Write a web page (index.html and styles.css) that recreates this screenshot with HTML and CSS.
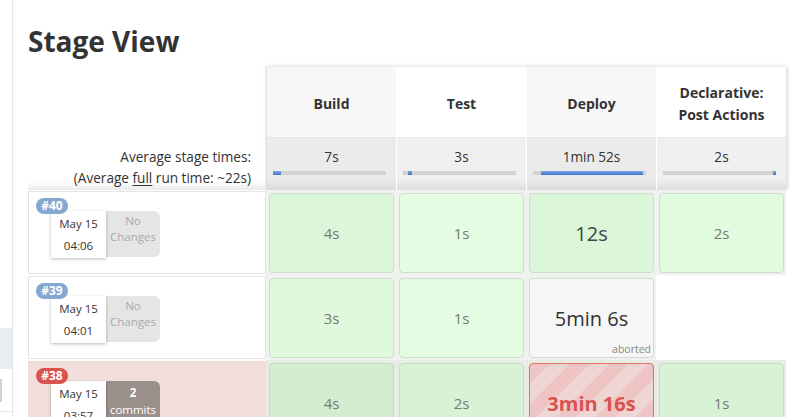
FILE: index.html
```html
<!DOCTYPE html>
<html lang="en">
<head>
<meta charset="utf-8">
<title>Stage View</title>
<link rel="stylesheet" href="styles.css">
</head>
<body>
<div class="page">
  <aside class="side">
    <div class="side-item"></div>
    <div class="side-field"><div class="side-bar"></div></div>
  </aside>
  <main class="main">
    <h2 class="title">Stage View</h2>
    <div class="sv-head">
      <div class="sv-labels">
        <div class="avg-label">Average stage times:<br>(Average <u>full</u> run time: ~22s)</div>
      </div>
      <div class="sv-stages">
        <div class="stage-col odd">
          <div class="stage-name">Build</div>
          <div class="stage-avg">
            <div class="avg-time">7s</div>
            <div class="track"><div class="fill" style="margin-left:0;width:8px"></div></div>
          </div>
        </div>
        <div class="stage-col">
          <div class="stage-name">Test</div>
          <div class="stage-avg">
            <div class="avg-time">3s</div>
            <div class="track"><div class="fill" style="margin-left:5px;width:4px"></div></div>
          </div>
        </div>
        <div class="stage-col odd">
          <div class="stage-name">Deploy</div>
          <div class="stage-avg">
            <div class="avg-time">1min 52s</div>
            <div class="track"><div class="fill" style="margin-left:8px;width:102px"></div></div>
          </div>
        </div>
        <div class="stage-col">
          <div class="stage-name">Declarative:<br>Post Actions</div>
          <div class="stage-avg">
            <div class="avg-time">2s</div>
            <div class="track"><div class="fill" style="margin-left:110px;width:3px"></div></div>
          </div>
        </div>
      </div>
    </div>

    <div class="sv-row">
      <div class="build-cell">
        <span class="badge blue">#40</span>
        <div class="build-info">
          <div class="date-box">May 15<br>04:06</div>
          <div class="changes">No<br>Changes</div>
        </div>
      </div>
      <div class="stage-wrap"><div class="stage ok s1">4s</div></div>
      <div class="stage-wrap"><div class="stage ok s2">1s</div></div>
      <div class="stage-wrap"><div class="stage ok s1 big">12s</div></div>
      <div class="stage-wrap"><div class="stage ok s3">2s</div></div>
    </div>

    <div class="sv-row">
      <div class="build-cell">
        <span class="badge blue">#39</span>
        <div class="build-info">
          <div class="date-box">May 15<br>04:01</div>
          <div class="changes">No<br>Changes</div>
        </div>
      </div>
      <div class="stage-wrap"><div class="stage ok s4">3s</div></div>
      <div class="stage-wrap"><div class="stage ok s2">1s</div></div>
      <div class="stage-wrap"><div class="stage aborted big">5min 6s<span class="note">aborted</span></div></div>
      <div class="stage-wrap empty"></div>
    </div>

    <div class="sv-row failed">
      <div class="build-cell">
        <span class="badge red">#38</span>
        <div class="build-info">
          <div class="date-box">May 15<br>03:57</div>
          <div class="changes commits"><b>2</b><br>commits</div>
        </div>
      </div>
      <div class="stage-wrap"><div class="stage ok f1">4s</div></div>
      <div class="stage-wrap"><div class="stage ok f2">2s</div></div>
      <div class="stage-wrap"><div class="stage fail big">3min 16s</div></div>
      <div class="stage-wrap"><div class="stage ok f2">1s</div></div>
    </div>
  </main>
</div>
</body>
</html>
```
FILE: styles.css
```css
* { box-sizing: border-box; }
body {
  margin: 0;
  font-family: "Open Sans", "Noto Sans", "DejaVu Sans", sans-serif;
  color: #333;
  background: #fff;
}
.page { display: flex; height: 417px; overflow: hidden; }
.side {
  width: 13px;
  flex: none;
  border-right: 1px solid #e4e8ec;
  padding-top: 328px;
}
.side-item { height: 41px; background: #e9edf1; }
.side-field {
  height: 43px;
  padding-top: 10px;
  border-bottom: 1px solid #e4e8ec;
}
.side-bar { width: 2px; height: 23px; background: #d2d2d2; }
.main { padding-left: 15px; flex: 1; }
.title {
  margin: 26px 0 11px;
  font-size: 28px;
  line-height: 30px;
  font-weight: 700;
  color: #333;
}
.sv-head { display: flex; }
.sv-labels {
  width: 238px;
  display: flex;
  flex-direction: column;
  justify-content: flex-end;
}
.avg-label {
  height: 52px;
  padding: 8px 15px 0 0;
  text-align: right;
  font-size: 13.6px;
  line-height: 21px;
  background: linear-gradient(#fff 84%, #eaeaea);
}
.avg-label u { text-underline-offset: 2px; }
.sv-stages {
  display: flex;
  border-left: 1px solid #dedede;
  box-shadow: 0 -1px 4px rgba(0,0,0,0.10), 2px 0 3px rgba(0,0,0,0.06);
}
.stage-col {
  width: 130px;
  display: flex;
  flex-direction: column;
  border-right: 1px solid #fff;
}
.stage-col:last-child { border-right: 1px solid #e4e4e4; }
.stage-name {
  height: 71px;
  padding-top: 4px;
  display: flex;
  align-items: center;
  justify-content: center;
  text-align: center;
  font-size: 14px;
  line-height: 22px;
  font-weight: 700;
  color: #333;
  background: #fff;
  border-bottom: 1px solid #e6e6e6;
}
.stage-col.odd .stage-name { background: #f7f7f7; }
.stage-avg {
  height: 52px;
  padding-top: 8px;
  background: linear-gradient(#f0f0f0 78%, #dedede);
}
.stage-col.odd .stage-avg { background: linear-gradient(#ebebeb 78%, #dadada); }
.avg-time {
  text-align: center;
  font-size: 13.6px;
  line-height: 22px;
}
.track {
  margin: 3px 0 0 6px;
  width: 113px;
  height: 4px;
  background: #d3d3d3;
  display: flex;
}
.fill { height: 4px; background: linear-gradient(#7ea3e3, #3f73cf); }

.sv-row { display: flex; height: 85px; }
.build-cell {
  width: 238px;
  height: 83px;
  margin-top: 1px;
  border: 1px solid #e4e4e4;
  background: #fff;
  position: relative;
  padding: 19px 0 0 22px;
}
.badge {
  position: absolute;
  left: 7px;
  top: 6px;
  z-index: 2;
  width: 32px;
  height: 16px;
  border-radius: 8px;
  color: #fff;
  font-size: 12px;
  font-weight: 700;
  line-height: 16px;
  text-align: center;
}
.badge.blue { background: #85a7d0; }
.badge.red { background: #d9534f; }
.build-info { display: flex; align-items: flex-start; }
.date-box {
  width: 55px;
  height: 47px;
  padding-top: 2px;
  background: #fff;
  box-shadow: 0 1px 3px rgba(0,0,0,0.28);
  text-align: center;
  font-size: 11.5px;
  line-height: 22px;
  color: #333;
  position: relative;
  z-index: 1;
}
.changes {
  width: 54px;
  height: 46px;
  padding-top: 2px;
  background: #e5e5e5;
  border-radius: 0 6px 6px 0;
  text-align: center;
  font-size: 11.5px;
  line-height: 16px;
  color: #aaa;
}
.changes.commits {
  background: #9b8f8b;
  color: #fff;
  padding-top: 3px;
  line-height: 17px;
}

.stage-wrap {
  width: 130px;
  padding: 3px 2px 2px 3px;
  background: #eff2ef;
}
.stage-wrap.empty { background: #fff; }
.stage {
  height: 80px;
  border: 1px solid #cddfca;
  border-radius: 4px;
  display: flex;
  align-items: center;
  justify-content: center;
  position: relative;
  font-size: 15px;
  color: #777;
}
.stage.big { font-size: 20px; color: #444; }
.s1 { background: #dcf6d9; }
.s2 { background: #e4fde2; }
.s3 { background: #e1fbdf; }
.s4 { background: #dff9dc; }
.stage.aborted { background: #f6f6f6; border-color: #d6d6d6; color: #333; }
.note {
  position: absolute;
  right: 2px;
  bottom: 1px;
  font-size: 10.5px;
  line-height: 14px;
  color: #888;
}

.sv-row.failed .build-cell { background: #f2dedb; border-color: #eedad6; }
.sv-row.failed .stage-wrap { background: #e7ece5; }
.f1 { background: #d4edd0; border-color: #c3d8c0; }
.f2 { background: #d8f2d5; border-color: #c6dcc3; }
.stage.fail {
  border-color: #e36f6f;
  background: repeating-linear-gradient(135deg, #eec4c4 0 14px, #eed6d3 14px 28px);
  color: #d9534f;
  font-weight: 700;
}
```
